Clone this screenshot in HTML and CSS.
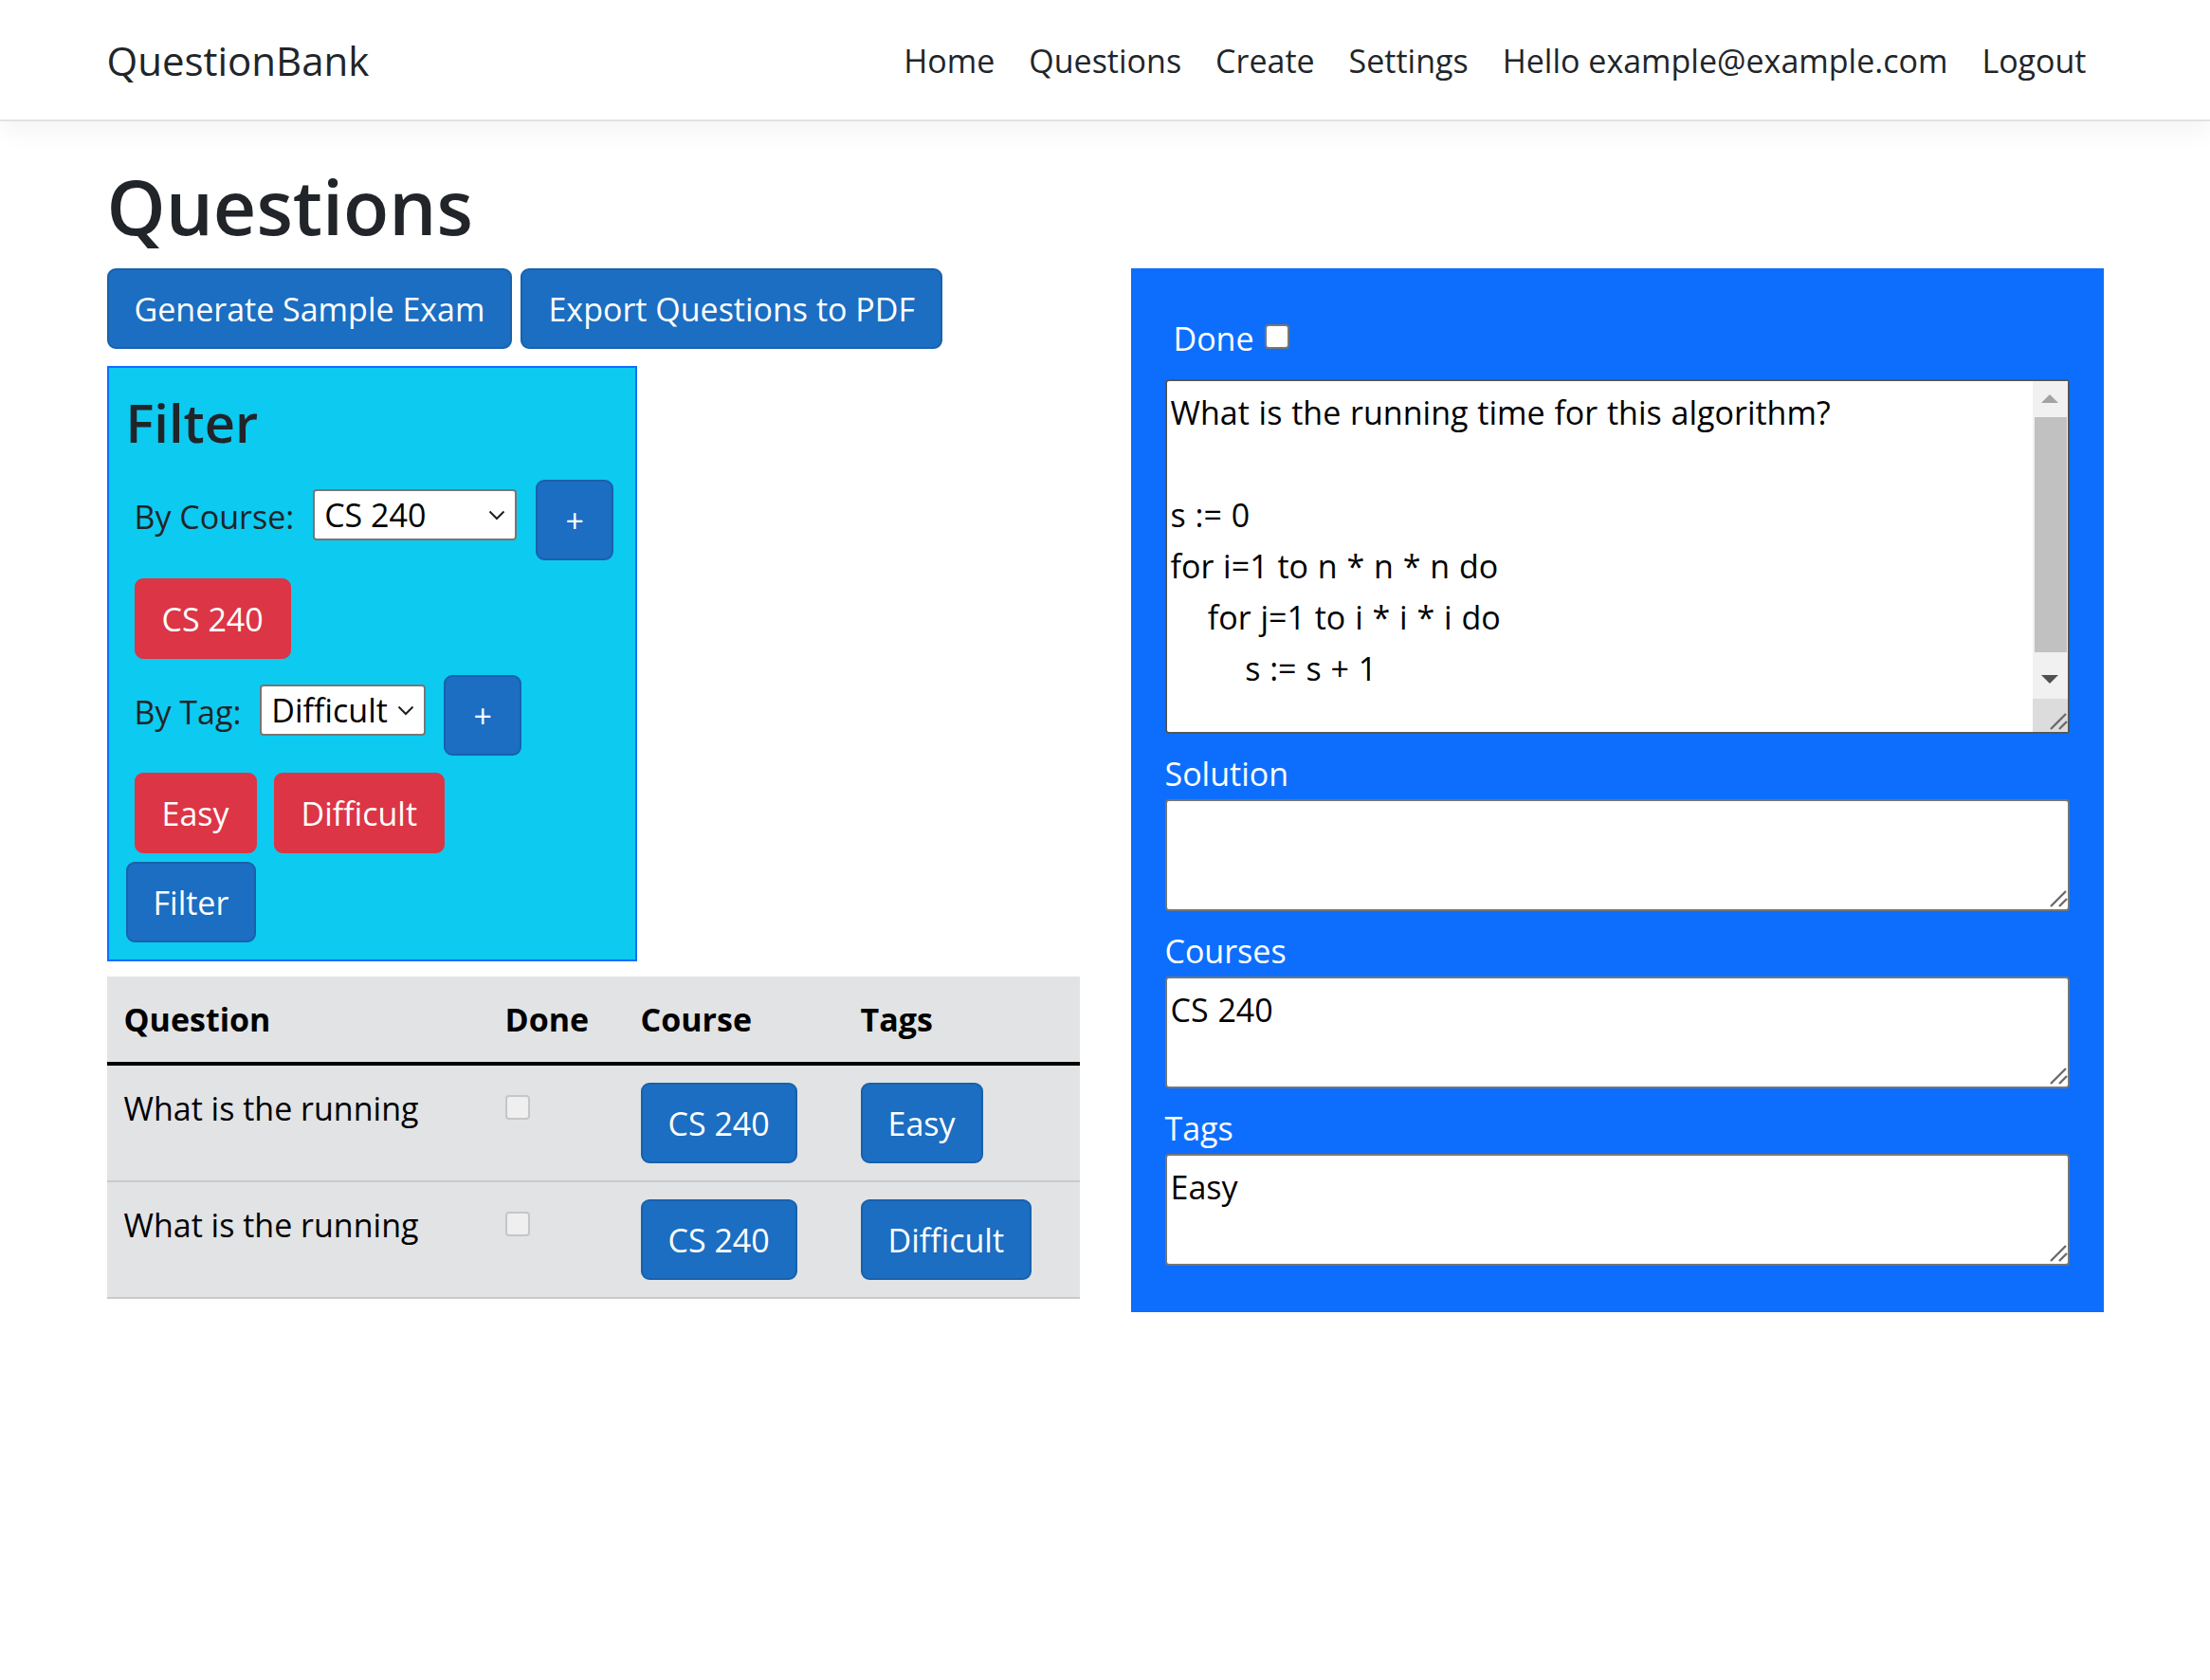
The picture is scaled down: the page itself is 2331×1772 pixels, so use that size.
FILE: index.html
```html
<!DOCTYPE html>
<html lang="en">
<head>
<meta charset="utf-8">
<title>Questions - QuestionBank</title>
<link rel="stylesheet" href="styles.css">
</head>
<body>
<header class="navbar">
  <div class="nav-inner">
    <a class="brand" href="#">QuestionBank</a>
    <ul class="nav-links">
      <li><a href="#">Home</a></li>
      <li><a href="#">Questions</a></li>
      <li><a href="#">Create</a></li>
      <li><a href="#">Settings</a></li>
      <li><a href="#">Hello example@example.com</a></li>
      <li><a href="#">Logout</a></li>
    </ul>
  </div>
</header>

<main class="container">
  <h1 class="page-title">Questions</h1>
  <div class="columns">
    <section class="col-left">
      <div class="actions">
        <button class="btn btn-primary" type="button">Generate Sample Exam</button>
        <button class="btn btn-primary" type="button">Export Questions to PDF</button>
      </div>

      <form class="filter">
        <h3 class="filter-title">Filter</h3>
        <div class="filter-row">
          <label class="filter-label label-course" for="course">By Course:</label>
          <span class="select-wrap select-course">
            <select id="course"><option>CS 240</option></select>
            <svg class="chevron" viewBox="0 0 18 11" width="18" height="11"><path d="M1.5 1.5 L9 9 L16.5 1.5" fill="none" stroke="#1f1f1f" stroke-width="2"/></svg>
          </span>
          <button class="btn btn-primary btn-add" type="button">+</button>
        </div>
        <div class="chips chips-course">
          <button class="btn btn-danger" type="button">CS 240</button>
        </div>
        <div class="filter-row filter-row-tag">
          <label class="filter-label label-tag" for="tag">By Tag:</label>
          <span class="select-wrap select-tag">
            <select id="tag"><option>Difficult</option></select>
            <svg class="chevron" viewBox="0 0 18 11" width="18" height="11"><path d="M1.5 1.5 L9 9 L16.5 1.5" fill="none" stroke="#1f1f1f" stroke-width="2"/></svg>
          </span>
          <button class="btn btn-primary btn-add btn-add-tag" type="button">+</button>
        </div>
        <div class="chips chips-tag">
          <button class="btn btn-danger" type="button">Easy</button>
          <button class="btn btn-danger" type="button">Difficult</button>
        </div>
        <button class="btn btn-primary btn-filter" type="button">Filter</button>
      </form>

      <table class="questions">
        <thead>
          <tr>
            <th class="c-question">Question</th>
            <th class="c-done">Done</th>
            <th class="c-course">Course</th>
            <th class="c-tags">Tags</th>
          </tr>
        </thead>
        <tbody>
          <tr>
            <td>What is the running</td>
            <td><input class="row-check" type="checkbox" disabled></td>
            <td><button class="btn btn-primary" type="button">CS 240</button></td>
            <td><button class="btn btn-primary" type="button">Easy</button></td>
          </tr>
          <tr>
            <td>What is the running</td>
            <td><input class="row-check" type="checkbox" disabled></td>
            <td><button class="btn btn-primary" type="button">CS 240</button></td>
            <td><button class="btn btn-primary" type="button">Difficult</button></td>
          </tr>
        </tbody>
      </table>
    </section>

    <section class="col-right">
      <div class="editor">
        <div class="done-row">
          <label class="done-label" for="done">Done</label>
          <input class="done-check" id="done" type="checkbox">
        </div>

        <div class="field-wrap field-wrap-question">
          <textarea class="field field-question">What is the running time for this algorithm?

s := 0
for i=1 to n * n * n do
    for j=1 to i * i * i do
        s := s + 1
</textarea>
          <div class="vscroll" aria-hidden="true">
            <span class="vs-btn"><svg width="18" height="9" viewBox="0 0 18 9"><polygon points="0,9 9,0 18,9" fill="#a3a3a3"/></svg></span>
            <span class="vs-track"><span class="vs-thumb"></span></span>
            <span class="vs-btn vs-down"><svg width="18" height="9" viewBox="0 0 18 9"><polygon points="0,0 18,0 9,9" fill="#505050"/></svg></span>
          </div>
          <span class="vs-corner" aria-hidden="true"></span>
          <svg class="grip" width="24" height="24" viewBox="0 0 24 24" aria-hidden="true"><path d="M4 19 L20 3 M13 19 L21 11" stroke="#6b6b6b" stroke-width="2.4" fill="none"/></svg>
        </div>

        <label class="field-label">Solution</label>
        <div class="field-wrap">
          <textarea class="field field-short"></textarea>
          <svg class="grip" width="24" height="24" viewBox="0 0 24 24" aria-hidden="true"><path d="M4 19 L20 3 M13 19 L21 11" stroke="#6b6b6b" stroke-width="2.4" fill="none"/></svg>
        </div>

        <label class="field-label">Courses</label>
        <div class="field-wrap">
          <textarea class="field field-short">CS 240</textarea>
          <svg class="grip" width="24" height="24" viewBox="0 0 24 24" aria-hidden="true"><path d="M4 19 L20 3 M13 19 L21 11" stroke="#6b6b6b" stroke-width="2.4" fill="none"/></svg>
        </div>

        <label class="field-label">Tags</label>
        <div class="field-wrap">
          <textarea class="field field-short">Easy</textarea>
          <svg class="grip" width="24" height="24" viewBox="0 0 24 24" aria-hidden="true"><path d="M4 19 L20 3 M13 19 L21 11" stroke="#6b6b6b" stroke-width="2.4" fill="none"/></svg>
        </div>
      </div>
    </section>
  </div>
</main>
</body>
</html>
```

FILE: styles.css
```css
html, body {
  margin: 0;
  padding: 0;
  background: #ffffff;
}

body {
  font-family: "Open Sans", "Noto Sans", "Liberation Sans", sans-serif;
  font-size: 34px;
  line-height: 54px;
  color: #212529;
}

*, *::before, *::after {
  box-sizing: border-box;
}

/* ---------- navbar ---------- */
.navbar {
  background: #ffffff;
  padding: 19px 0 17px;
  border-bottom: 2px solid #dee2e6;
  box-shadow: 0 9px 27px rgba(0, 0, 0, 0.05);
  margin-bottom: 36px;
}

.nav-inner {
  max-width: 2160px;
  margin: 0 auto;
  padding: 0 27px;
  display: flex;
  align-items: center;
  height: 90px;
}

.brand {
  font-size: 42px;
  line-height: 67.5px;
  padding: 11px 0;
  color: #212529;
  text-decoration: none;
  white-space: nowrap;
}

.nav-links {
  list-style: none;
  margin: 0 0 0 auto;
  padding: 0;
  display: flex;
}

.nav-links a {
  display: block;
  padding: 18px 18px;
  color: #212529;
  text-decoration: none;
  white-space: nowrap;
}

/* ---------- main ---------- */
.container {
  max-width: 2160px;
  margin: 0 auto;
  padding: 0 27px;
}

.page-title {
  margin: 0 0 12px;
  font-size: 79px;
  line-height: 107px;
  font-weight: 600;
  color: #212529;
}

.columns {
  display: grid;
  grid-template-columns: 1fr 1fr;
  column-gap: 54px;
  align-items: start;
}

/* ---------- buttons ---------- */
.btn {
  display: inline-block;
  font-family: inherit;
  font-size: 34px;
  line-height: 54px;
  padding: 13.5px 27px;
  border: 2px solid transparent;
  border-radius: 9px;
  color: #ffffff;
  cursor: pointer;
  white-space: nowrap;
  vertical-align: top;
}

.btn-primary {
  background: #1b6ec2;
  border-color: #1861ac;
}

.btn-danger {
  background: #dc3545;
  border-color: #dc3545;
}

.actions {
  display: flex;
  gap: 9px;
}

/* ---------- filter ---------- */
.filter {
  width: 559px;
  margin-top: 18px;
  padding: 18px 18px 18px;
  background: #0dcaf0;
  border: 2px solid #0d6efd;
}

.filter-title {
  margin: 0 0 21px;
  font-size: 56px;
  line-height: 79px;
  font-weight: 600;
  color: #212529;
}

.filter-row {
  display: flex;
  align-items: flex-start;
  padding-left: 9px;
}

.filter-row-tag {
  margin-top: 17px;
}

.filter-label {
  margin-top: 12px;
  white-space: nowrap;
}

.label-course {
  flex: 0 0 165px;
}

.label-tag {
  flex: 0 0 109px;
}

.select-wrap {
  position: relative;
  display: block;
  margin-top: 10px;
  margin-left: 20px;
  height: 54px;
}

.select-course {
  width: 215px;
}

.select-tag {
  width: 175px;
}

.select-wrap select {
  appearance: none;
  -webkit-appearance: none;
  display: block;
  width: 100%;
  height: 54px;
  margin: 0;
  padding: 0 0 0 10px;
  font-family: inherit;
  font-size: 34px;
  line-height: 50px;
  color: #000000;
  background: #ffffff;
  border: 2px solid #767676;
  border-radius: 4px;
}

.chevron {
  position: absolute;
  right: 12px;
  top: 22px;
  pointer-events: none;
}

.btn-add {
  margin-left: 20px;
  width: 82px;
  padding-left: 0;
  padding-right: 0;
  text-align: center;
}

.btn-add-tag {
  margin-left: 19px;
}

.chips {
  display: flex;
  gap: 18px;
  padding-left: 9px;
  margin-top: 19px;
}

.chips-tag {
  margin-top: 18px;
}

.btn-filter {
  display: block;
  margin-top: 9px;
}

/* ---------- table ---------- */
.questions {
  width: 100%;
  margin-top: 16px;
  table-layout: fixed;
  border-collapse: separate;
  border-spacing: 0;
  background: #e2e3e5;
  color: #000000;
}

.questions th,
.questions td {
  padding: 18px;
  text-align: left;
  vertical-align: top;
  white-space: nowrap;
}

.questions thead th {
  font-weight: 700;
  border-bottom: 4px solid #000000;
}

.questions tbody td {
  border-bottom: 2px solid #c9cacc;
}

.c-question { width: 402px; }
.c-done { width: 143px; }
.c-course { width: 232px; }
.c-tags { width: 249px; }

.row-check {
  appearance: none;
  -webkit-appearance: none;
  display: block;
  width: 26px;
  height: 26px;
  margin: 13px 0 0 0;
  background: #efefef;
  border: 2px solid #c6c6c6;
  border-radius: 4px;
}

/* ---------- editor ---------- */
.editor {
  background: #0d6efd;
  color: #ffffff;
  padding: 36px;
}

.done-row {
  display: flex;
  align-items: flex-start;
  margin-top: 11px;
  height: 54px;
}

.done-label {
  margin-left: 9px;
}

.done-check {
  appearance: none;
  -webkit-appearance: none;
  width: 26px;
  height: 26px;
  margin: 12px 0 0 11px;
  background: #ffffff;
  border: 2px solid #767676;
  border-radius: 4px;
}

.field-wrap {
  position: relative;
  margin-bottom: 15px;
}

.field-wrap-question {
  margin-top: 16px;
}

.editor .field-wrap:last-child {
  margin-bottom: 13px;
}

.field {
  display: block;
  width: 100%;
  margin: 0;
  padding: 6px 4px 4px;
  font-family: inherit;
  font-size: 34px;
  line-height: 54px;
  word-spacing: 1px;
  color: #000000;
  background: #ffffff;
  border: 2px solid #767676;
  border-radius: 4px;
  resize: none;
  overflow: hidden;
}

.field-question {
  height: 374px;
  padding-right: 44px;
  border-color: #555555;
}

.field-short {
  height: 118px;
}

.field-label {
  display: block;
}

/* scrollbar of the question textarea */
.vscroll {
  position: absolute;
  top: 2px;
  right: 2px;
  width: 37px;
  height: 335px;
  display: flex;
  flex-direction: column;
  background: #f1f1f1;
}

.vs-btn {
  flex: 0 0 36px;
  display: flex;
  align-items: center;
  justify-content: center;
}

.vs-down {
  align-items: flex-start;
  padding-top: 11px;
}

.vs-track {
  flex: 1 1 auto;
  display: block;
}

.vs-thumb {
  display: block;
  height: 248px;
  margin: 2px 1px 0 2px;
  background: #c1c1c1;
}

.vs-corner {
  position: absolute;
  right: 2px;
  bottom: 2px;
  width: 37px;
  height: 35px;
  background: #dcdcdc;
}

.grip {
  position: absolute;
  right: 0;
  bottom: 0;
  pointer-events: none;
}
```
